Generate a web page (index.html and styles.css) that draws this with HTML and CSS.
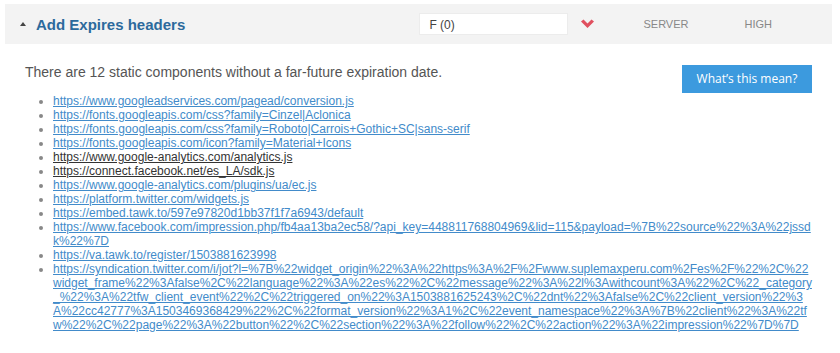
FILE: index.html
```html
<!DOCTYPE html>
<html lang="en">
<head>
    <meta charset="UTF-8">
    <meta name="viewport" content="width=device-width, initial-scale=1.0">
    <title>Add Expires headers</title>
    <link rel="stylesheet" href="styles.css">
</head>
<body>
    <div class="panel">
        <div class="panel-head">
            <span class="toggle"></span>
            <span class="title">Add Expires headers</span>
            <span class="grade">F (0)</span>
            <svg class="chevron" width="15" height="10" viewBox="0 0 15 10">
                <path d="M1 2.5 L3.5 0.5 L7.5 4.5 L11.5 0.5 L14 2.5 L7.5 9 Z" fill="#e0505f"/>
            </svg>
            <span class="meta type">Server</span>
            <span class="meta priority">High</span>
        </div>
        <div class="panel-body">
            <div class="summary">
                <p>There are 12 static components without a far-future expiration date.</p>
                <a class="btn" href="#">What’s this mean?</a>
            </div>
            <ul class="urls">
                <li><a href="#">https://www.googleadservices.com/pagead/conversion.js</a></li>
                <li><a href="#">https://fonts.googleapis.com/css?family=Cinzel|Aclonica</a></li>
                <li><a href="#">https://fonts.googleapis.com/css?family=Roboto|Carrois+Gothic+SC|sans-serif</a></li>
                <li><a href="#">https://fonts.googleapis.com/icon?family=Material+Icons</a></li>
                <li><a class="seen" href="#">https://www.google-analytics.com/analytics.js</a></li>
                <li><a class="seen" href="#">https://connect.facebook.net/es_LA/sdk.js</a></li>
                <li><a href="#">https://www.google-analytics.com/plugins/ua/ec.js</a></li>
                <li><a href="#">https://platform.twitter.com/widgets.js</a></li>
                <li><a href="#">https://embed.tawk.to/597e97820d1bb37f1f7a6943/default</a></li>
                <li><a href="#">https://www.facebook.com/impression.php/fb4aa13ba2ec58/?api_key=448811768804969&amp;lid=115&amp;payload=%7B%22source%22%3A%22jssdk%22%7D</a></li>
                <li><a href="#">https://va.tawk.to/register/1503881623998</a></li>
                <li><a href="#">https://syndication.twitter.com/i/jot?l=%7B%22widget_origin%22%3A%22https%3A%2F%2Fwww.suplemaxperu.com%2Fes%2F%22%2C%22widget_frame%22%3Afalse%2C%22language%22%3A%22es%22%2C%22message%22%3A%22l%3Awithcount%3A%22%2C%22_category_%22%3A%22tfw_client_event%22%2C%22triggered_on%22%3A1503881625243%2C%22dnt%22%3Afalse%2C%22client_version%22%3A%22cc42777%3A1503469368429%22%2C%22format_version%22%3A1%2C%22event_namespace%22%3A%7B%22client%22%3A%22tfw%22%2C%22page%22%3A%22button%22%2C%22section%22%3A%22follow%22%2C%22action%22%3A%22impression%22%7D%7D</a></li>
            </ul>
        </div>
    </div>
</body>
</html>
```

FILE: styles.css
```css
body {
    margin: 0;
    background-color: #ffffff;
    font-family: 'Liberation Sans', Arial, sans-serif;
    color: #555555;
}
.panel {
    margin: 4px 8px 0 5px;
}
.panel-head {
    display: flex;
    align-items: center;
    height: 40px;
    padding: 0 60px 0 15px;
    background-color: #f3f3f3;
}
.toggle {
    width: 0;
    height: 0;
    border-left: 3px solid transparent;
    border-right: 3px solid transparent;
    border-bottom: 4px solid #444444;
}
.title {
    flex: 1;
    margin-left: 10px;
    font-size: 15px;
    font-weight: bold;
    color: #2c6a9c;
}
.grade {
    box-sizing: border-box;
    width: 149px;
    height: 22px;
    padding: 0 9px;
    line-height: 22px;
    background-color: #ffffff;
    border: 1px solid #ececec;
    font-size: 12px;
    color: #444444;
}
.chevron {
    margin-left: 12px;
}
.meta {
    font-size: 11px;
    color: #888888;
    text-transform: uppercase;
}
.type {
    margin-left: 48px;
}
.priority {
    margin-left: 56px;
}
.panel-body {
    padding: 18px 20px 20px 20px;
}
.summary {
    display: flex;
    justify-content: space-between;
    align-items: flex-start;
}
.summary p {
    margin: 0;
    font-size: 14px;
    line-height: 20px;
    color: #555555;
}
.btn {
    display: block;
    margin-top: 3px;
    width: 130px;
    height: 28px;
    line-height: 28px;
    text-align: center;
    background-color: #3c9ade;
    color: #ffffff;
    font-family: 'Open Sans', sans-serif;
    font-size: 12px;
    text-decoration: none;
}
.urls {
    margin: 1px 0 0 0;
    padding-left: 28px;
    font-size: 12px;
    line-height: 14px;
    color: #888888;
}
.urls a {
    color: #428bca;
    word-break: break-all;
}
.urls a.seen {
    color: #333333;
}
```
